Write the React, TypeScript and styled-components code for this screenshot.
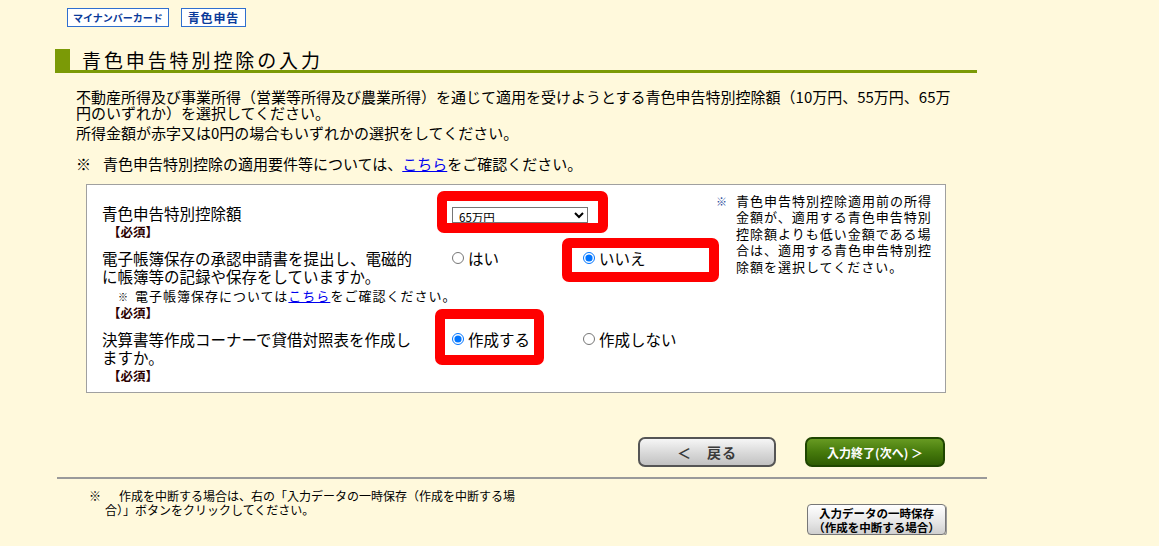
import React from 'react'
import styled, { createGlobalStyle } from 'styled-components'

const GlobalStyle = createGlobalStyle`
  body {
    margin: 0;
    background: #fff9dc;
    font-family: "Noto Sans CJK JP", "Noto Sans", sans-serif;
    color: #000;
  }
`

const App: React.FC = () => {
  return (
    <>
      <GlobalStyle />
      <StyledPage>
        <StyledTagRow>
          <StyledTag small>マイナンバーカード</StyledTag>
          <StyledTag>青色申告</StyledTag>
        </StyledTagRow>

        <StyledHeading>
          <span>青色申告特別控除の入力</span>
        </StyledHeading>

        <StyledIntro>
          <StyledLead>
            不動産所得及び事業所得（営業等所得及び農業所得）を通じて適用を受けようとする青色申告特別控除額（10万円、55万円、65万円のいずれか）を選択してください。
          </StyledLead>
          <StyledLead gap={4}>所得金額が赤字又は0円の場合もいずれかの選択をしてください。</StyledLead>
          <StyledLead gap={15}>
            <StyledMark width={27}>※</StyledMark>
            青色申告特別控除の適用要件等については、<StyledLink href="#">こちら</StyledLink>をご確認ください。
          </StyledLead>
        </StyledIntro>

        <StyledBox>
          <StyledLabelCell row={1} top={11}>
            <StyledLabel>青色申告特別控除額</StyledLabel>
            <StyledRequired gap={2}>【必須】</StyledRequired>
          </StyledLabelCell>
          <StyledSelectCell>
            <StyledSelect defaultValue="65">
              <option value="">　</option>
              <option value="10">10万円</option>
              <option value="55">55万円</option>
              <option value="65">65万円</option>
            </StyledSelect>
          </StyledSelectCell>
          <StyledNote>
            <StyledNoteMark>※</StyledNoteMark>
            <StyledNoteText>
              青色申告特別控除適用前の所得金額が、適用する青色申告特別控除額よりも低い金額である場合は、適用する青色申告特別控除額を選択してください。
            </StyledNoteText>
          </StyledNote>

          <StyledLabelCell row={2}>
            <StyledLabel>電子帳簿保存の承認申請書を提出し、電磁的に帳簿等の記録や保存をしていますか。</StyledLabel>
            <StyledSubNote>
              <StyledSubMark>※</StyledSubMark>
              電子帳簿保存については<StyledLink href="#">こちら</StyledLink>をご確認ください。
            </StyledSubNote>
            <StyledRequired>【必須】</StyledRequired>
          </StyledLabelCell>
          <StyledOption row={2} col={2}>
            <input type="radio" name="denshi" />
            はい
          </StyledOption>
          <StyledOption row={2} col={3}>
            <input type="radio" name="denshi" defaultChecked />
            いいえ
          </StyledOption>

          <StyledLabelCell row={3}>
            <StyledLabel>決算書等作成コーナーで貸借対照表を作成しますか。</StyledLabel>
            <StyledRequired gap={2}>【必須】</StyledRequired>
          </StyledLabelCell>
          <StyledOption row={3} col={2}>
            <input type="radio" name="taishaku" defaultChecked />
            作成する
          </StyledOption>
          <StyledOption row={3} col={3}>
            <input type="radio" name="taishaku" />
            作成しない
          </StyledOption>

          <StyledHighlight left={350} top={6} w={171} h={42} />
          <StyledHighlight left={475} top={53} w={157} h={44} />
          <StyledHighlight left={348} top={124} w={109} h={56} />
        </StyledBox>

        <StyledButtonRow>
          <StyledBackButton>＜　戻る</StyledBackButton>
          <StyledNextButton>入力終了(次へ) ＞</StyledNextButton>
        </StyledButtonRow>

        <StyledRule />

        <StyledFooter>
          <StyledFooterNote>
            <StyledMark width={30}>※</StyledMark>
            作成を中断する場合は、右の「入力データの一時保存（作成を中断する場合）」ボタンをクリックしてください。
          </StyledFooterNote>
          <StyledSaveButton>
            <span>入力データの一時保存</span>
            <span>（作成を中断する場合）</span>
          </StyledSaveButton>
        </StyledFooter>
      </StyledPage>
    </>
  )
}

const StyledPage = styled.div`
  padding: 8px 0 0 55px;
  width: 932px;
`

const StyledTagRow = styled.div`
  display: flex;
  gap: 12px;
  margin-left: 12px;
`

const StyledTag = styled.div<{ small?: boolean }>`
  height: 19px;
  box-sizing: border-box;
  padding: 0 ${(props) => (props.small ? '5px' : '6px')};
  display: flex;
  align-items: center;
  background: #fff;
  border: 1.5px solid #2f6fcf;
  color: #0a3a9a;
  font-weight: 700;
  font-size: ${(props) => (props.small ? '10px' : '12px')};
  letter-spacing: ${(props) => (props.small ? '0px' : '0.8px')};
`

const StyledHeading = styled.h1`
  margin: 22px 0 0;
  width: 922px;
  height: 21px;
  display: flex;
  align-items: center;
  border-bottom: 3px solid #7b9a06;
  font-size: 19px;
  font-weight: 400;
  line-height: 21px;
  letter-spacing: 2.9px;
  &::before {
    content: '';
    width: 15px;
    height: 21px;
    background: #7b9a06;
    margin-right: 12px;
  }
`

const StyledIntro = styled.div`
  margin: 16px 0 0 21px;
  width: 880px;
`

const StyledLead = styled.p<{ gap?: number }>`
  margin: ${(props) => props.gap || 0}px 0 0;
  font-size: 15px;
  line-height: 16px;
`

const StyledMark = styled.span<{ width: number }>`
  display: inline-block;
  width: ${(props) => props.width}px;
  text-indent: 0;
`

const StyledLink = styled.a`
  color: #0000ee;
  text-decoration: underline;
`

const StyledBox = styled.div`
  position: relative;
  margin: 12px 0 0 31px;
  width: 860px;
  box-sizing: border-box;
  padding: 8px 15px 8px;
  background: #fff;
  border: 1px solid #a0a0a0;
  display: grid;
  grid-template-columns: 350px 131px 130px 1fr;
  row-gap: 9px;
  align-items: start;
`

const StyledLabelCell = styled.div<{ row: number; top?: number }>`
  grid-column: 1;
  grid-row: ${(props) => props.row};
  padding-top: ${(props) => props.top || 0}px;
`

const StyledLabel = styled.div`
  width: 322px;
  font-size: 15.5px;
  line-height: 18px;
`

const StyledRequired = styled.div<{ gap?: number }>`
  margin: ${(props) => props.gap || 0}px 0 0 6px;
  font-size: 12.5px;
  font-weight: 700;
  line-height: 16px;
  color: #2a0000;
`

const StyledSubNote = styled.div`
  margin: 3px 0 0 16px;
  white-space: nowrap;
  font-size: 13px;
  letter-spacing: 1px;
  line-height: 16px;
`

const StyledSubMark = styled.span`
  font-size: 10px;
  margin-right: 6px;
`

const StyledSelectCell = styled.div`
  grid-column: 2 / span 2;
  grid-row: 1;
  padding-top: 14px;
`

const StyledSelect = styled.select`
  display: block;
  width: 136px;
  height: 16px;
  padding: 0 2px;
  font-family: "Noto Sans CJK JP", sans-serif;
  font-size: 11.5px;
  border: 1px solid #767676;
  border-radius: 0;
  background: #fff;
`

const StyledNote = styled.div`
  grid-column: 4;
  grid-row: 1 / span 2;
  display: flex;
  padding-left: 3px;
  font-size: 13px;
  line-height: 16.4px;
`

const StyledNoteMark = styled.span`
  width: 20px;
  flex: none;
  font-size: 11px;
  color: #3050a0;
`

const StyledNoteText = styled.div`
  width: 200px;
  letter-spacing: 1px;
`

const StyledOption = styled.label<{ row: number; col: number }>`
  grid-row: ${(props) => props.row};
  grid-column: ${(props) => props.col};
  display: flex;
  align-items: center;
  gap: 4px;
  height: 18px;
  font-size: 15.5px;
  input {
    margin: 0;
    width: 12px;
    height: 12px;
  }
`

const StyledHighlight = styled.div<{ left: number; top: number; w: number; h: number }>`
  position: absolute;
  left: ${(props) => props.left}px;
  top: ${(props) => props.top}px;
  width: ${(props) => props.w}px;
  height: ${(props) => props.h}px;
  box-sizing: border-box;
  border: 10px solid #ff0000;
  border-radius: 7px;
  pointer-events: none;
`

const StyledButtonRow = styled.div`
  margin: 44px 0 0 31px;
  width: 860px;
  display: flex;
  justify-content: flex-end;
  gap: 29px;
  padding-right: 1px;
  box-sizing: border-box;
`

const StyledBackButton = styled.button`
  width: 138px;
  height: 30px;
  border: 2px solid #555;
  border-radius: 7px;
  background: linear-gradient(#f6f6f6, #d8d8d8 55%, #c2c2c2);
  color: #3a3a3a;
  font-family: "Noto Sans CJK JP", sans-serif;
  font-size: 14px;
  font-weight: 700;
  letter-spacing: 1px;
`

const StyledNextButton = styled.button`
  width: 140px;
  height: 30px;
  border: 2px solid #1f4600;
  border-radius: 7px;
  background: linear-gradient(#679a22, #467a0c 50%, #2f5c02);
  color: #fff;
  font-family: "Noto Sans CJK JP", sans-serif;
  font-size: 12px;
  font-weight: 700;
`

const StyledRule = styled.div`
  margin: 10px 0 0 2px;
  width: 930px;
  height: 2px;
  background: #9a9a9a;
`

const StyledFooter = styled.div`
  margin-left: 34px;
  width: 857px;
  display: flex;
  justify-content: space-between;
  align-items: flex-start;
`

const StyledFooterNote = styled.p`
  margin: 10px 0 0;
  width: 445px;
  box-sizing: border-box;
  padding-left: 16px;
  text-indent: -16px;
  font-size: 12px;
  line-height: 14px;
`

const StyledSaveButton = styled.button`
  margin-top: 25px;
  width: 139px;
  height: 31px;
  padding: 0;
  display: flex;
  flex-direction: column;
  align-items: center;
  justify-content: center;
  border: 1px solid #777;
  border-radius: 4px;
  background: linear-gradient(#ffffff, #e6e6e6 60%, #cfcfcf);
  box-shadow: 1px 1px 0 #999;
  color: #000;
  font-family: "Noto Sans CJK JP", sans-serif;
  font-size: 11.5px;
  font-weight: 700;
  line-height: 14px;
`

export default App
